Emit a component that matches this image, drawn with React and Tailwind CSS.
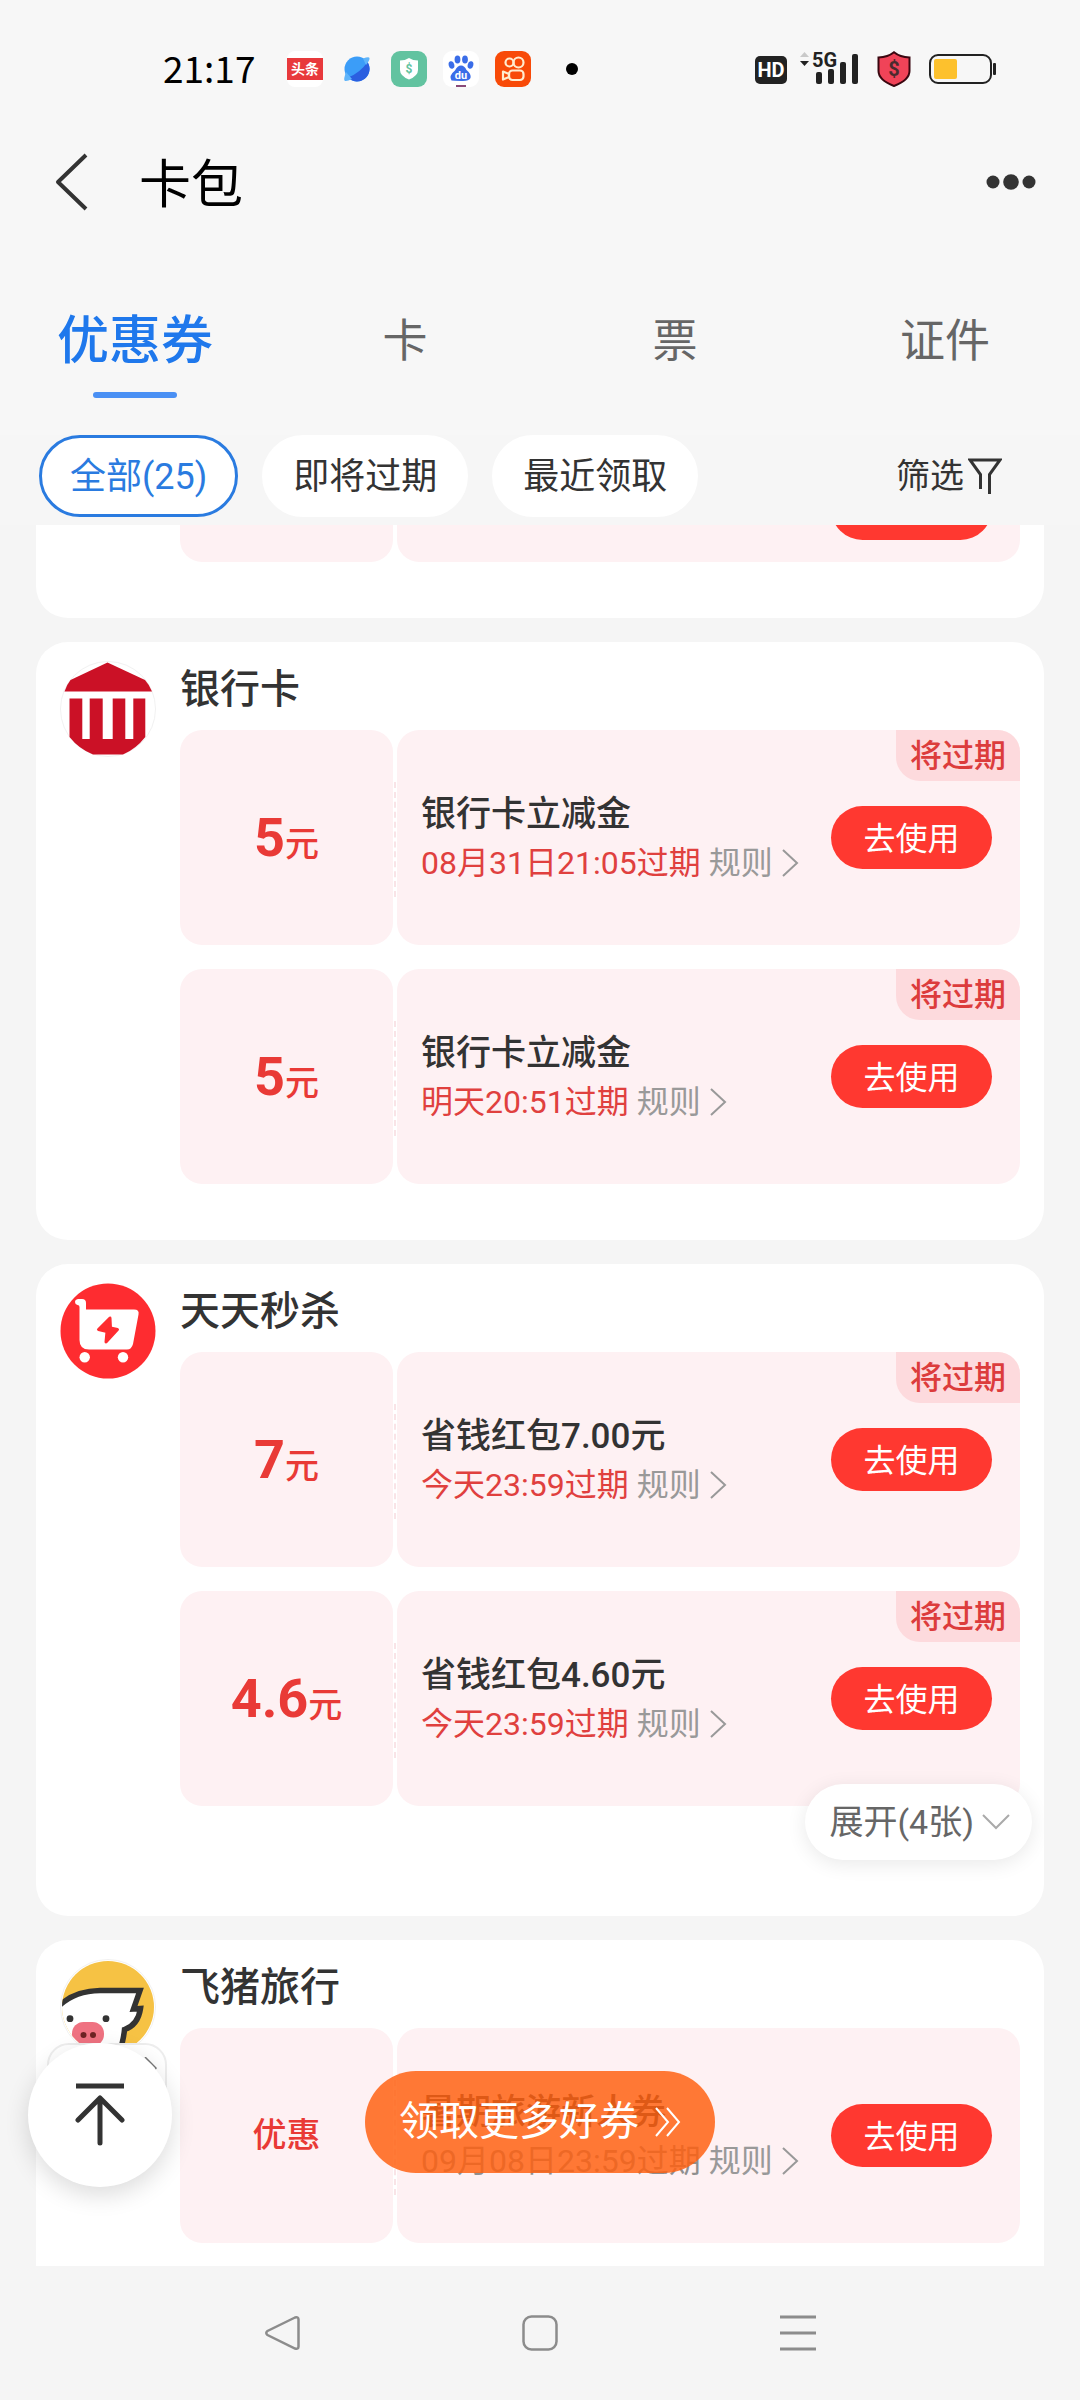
import React, { useState } from "react";

const tabs = ["优惠券", "卡", "票", "证件"];
const filters = ["全部(25)", "即将过期", "最近领取"];

/* ---------- shop logos ---------- */

const BankLogo = () => (
  <svg viewBox="0 0 96 96" className="h-24 w-24">
    <circle cx="48" cy="48" r="47.5" fill="#fff" stroke="#f1f1f1" />
    <path d="M47.5 1.5 85 19q4.500 5 7 11.500H4.500Q6.500 24 10.500 19z" fill="#cb1126" />
    <path
      d="M9.500 37.500h12.800V78h7.400V37.500h13V78h10V37.500h12.600V78h8V37.500h12V76Q76 88 63 93.500H33Q19 88 9.500 76z"
      fill="#cb1126"
    />
  </svg>
);

const CartLogo = () => (
  <svg viewBox="0 0 96 96" className="h-24 w-24">
    <circle cx="48" cy="48" r="47.500" fill="#fe2c30" />
    <path
      d="M18 16h4q4 0 4 4v6.500h48q5.500 0 4.500 5L73 61q-1.500 5.500-6 5.500H29q-9.500 0-9.500-9.500V24q0-2-2-2-2.500-.5-2.500-3t3-3z"
      fill="#fff"
    />
    <path
      d="M50 35 38.500 46.500l8.500 2L46 59l11.500-12.500-7-1.500z"
      fill="#fe2c30"
      stroke="#fe2c30"
      strokeWidth="3"
      strokeLinejoin="round"
    />
    <circle cx="24.700" cy="74.300" r="5.200" fill="#fff" />
    <circle cx="63" cy="74.300" r="5.200" fill="#fff" />
  </svg>
);

const PigLogo = () => (
  <svg viewBox="0 0 96 96" className="h-24 w-24">
    <defs>
      <clipPath id="pig-round">
        <circle cx="48" cy="48" r="46" />
      </clipPath>
    </defs>
    <circle cx="48" cy="48" r="47.500" fill="#fff" stroke="#f1f1f1" />
    <g clipPath="url(#pig-round)">
      <rect width="96" height="96" fill="#f6c244" />
      <path
        d="M-4 50Q12 32 40 31.500h40L73.500 50l7-.5Q78 66 64.500 70.500 63.500 82 58 98H-4z"
        fill="#fff"
        stroke="#333"
        strokeWidth="5.500"
      />
      <circle cx="10" cy="59.700" r="3.400" fill="#333" />
      <circle cx="46" cy="59.700" r="3.400" fill="#333" />
      <rect x="12" y="63" width="32" height="24" rx="11.500" fill="#ef7281" />
      <circle cx="23.500" cy="76" r="3" fill="#6e2323" />
      <circle cx="33" cy="76" r="3" fill="#6e2323" />
    </g>
  </svg>
);

const shops = [
  {
    name: "银行卡",
    logo: BankLogo,
    coupons: [
      { amount: "5", title: "银行卡立减金", expire: "08月31日21:05过期", soon: true },
      { amount: "5", title: "银行卡立减金", expire: "明天20:51过期", soon: true },
    ],
  },
  {
    name: "天天秒杀",
    logo: CartLogo,
    more: 4,
    coupons: [
      { amount: "7", title: "省钱红包7.00元", expire: "今天23:59过期", soon: true },
      { amount: "4.6", title: "省钱红包4.60元", expire: "今天23:59过期", soon: true },
    ],
  },
  {
    name: "飞猪旅行",
    logo: PigLogo,
    coupons: [{ title: "暑期旅游新人券", expire: "09月08日23:59过期", soon: false }],
  },
];

/* ---------- status bar ---------- */

const StatusBar = () => (
  <div className="flex h-[138px] shrink-0 items-center justify-between pr-[84px] pl-[163px]">
    <div className="flex items-center">
      <span className="w-[124px] pb-1 font-['Noto_Sans_CJK_SC',sans-serif] text-[37px] leading-[48px] text-black">
        21:17
      </span>
      <div className="flex items-center gap-4">
        <div className="flex h-9 w-9 items-center rounded-lg bg-white">
          <div className="flex h-[22px] w-9 items-center justify-center bg-[#e8393c] text-[14px] leading-none font-bold text-white">
            头条
          </div>
        </div>
        <svg viewBox="0 0 36 36" className="h-9 w-9">
          <circle cx="18" cy="18" r="12.500" fill="#3b9df8" />
          <path d="M28.500 11A12.500 12.500 0 0 1 9 26.500Q21 22 28.500 11z" fill="#2b5fe0" />
          <path d="M24 7.500q6-2 6.500-.5.500 2-3.500 7M7 21q-2.500 7-1.500 8.500Q7 31 13 28" fill="#5fb4fa" />
        </svg>
        <svg viewBox="0 0 36 36" className="h-9 w-9">
          <rect width="36" height="36" rx="9" fill="#62c3a0" />
          <path d="M18 7q4 2.500 9 2.500V19q0 6-9 9.500Q9 25 9 19V9.500q5 0 9-2.500z" fill="#fff" />
          <text x="18" y="22" textAnchor="middle" fontSize="12" fontWeight="700" fill="#62c3a0">
            $
          </text>
        </svg>
        <svg viewBox="0 0 36 36" className="h-9 w-9">
          <rect width="36" height="36" rx="9" fill="#fff" />
          <g fill="#3a6de8">
            <ellipse cx="8.500" cy="14" rx="2.800" ry="3.800" transform="rotate(-15 8.500 14)" />
            <ellipse cx="14.500" cy="8.500" rx="2.900" ry="3.900" />
            <ellipse cx="22" cy="8.500" rx="2.900" ry="3.900" />
            <ellipse cx="27.500" cy="14" rx="2.800" ry="3.800" transform="rotate(15 27.500 14)" />
            <path d="M18 14.500q3.500 0 5.500 4.500 5 4 4 8-1.500 3.500-9.500 3t-9.500-.5q-3-5 3.500-10 2.500-5 6-5z" />
          </g>
          <text x="18" y="27.500" textAnchor="middle" fontSize="11" fontWeight="700" fill="#fff">
            du
          </text>
          <path d="M13 35h10" stroke="#8a4a78" strokeWidth="2" />
        </svg>
        <svg viewBox="0 0 36 36" className="h-9 w-9">
          <rect width="36" height="36" rx="9" fill="#f84a08" />
          <g fill="none" stroke="#ffeccf" strokeWidth="2.200">
            <circle cx="14.500" cy="11.500" r="4" />
            <circle cx="23.500" cy="11.500" r="5" />
            <rect x="14" y="19.500" width="14.500" height="9.500" rx="3.500" />
            <path d="m8 20.500 6 2.500v3l-6 2.500z" strokeLinejoin="round" />
          </g>
        </svg>
      </div>
      <span className="ml-[35px] h-3 w-3 rounded-full bg-black" />
    </div>

    <div className="flex items-center">
      <svg viewBox="0 0 32 36" className="h-9 w-8">
        <rect y="5" width="32" height="28" rx="5" fill="#222" />
        <text x="16" y="26" textAnchor="middle" fontSize="20" fontWeight="700" fill="#fff">
          HD
        </text>
      </svg>
      <svg viewBox="0 0 60 36" className="ml-3 h-9 w-[60px] overflow-visible">
        <path d="m5.500 1 4.500 5H1z" fill="#c9c9c9" />
        <path d="M1 10h9l-4.500 5z" fill="#222" />
        <text x="13" y="16" fontSize="20" fontWeight="700" fill="#222">
          5G
        </text>
        <g fill="#222">
          <rect x="17" y="21" width="6" height="12" rx="2" />
          <rect x="29" y="18" width="6" height="15" rx="2" />
          <rect x="41" y="11" width="6" height="22" rx="2" />
          <rect x="53" y="3" width="6" height="30" rx="2" />
        </g>
      </svg>
      <svg viewBox="0 0 34 36" className="ml-[18px] h-9 w-[34px]">
        <path
          d="M17 1.200Q23 6 32.500 6.500V20q0 9-15.500 15Q1.500 29 1.500 20V6.500Q11 6 17 1.200z"
          fill="#f04358"
          stroke="#3a0710"
          strokeWidth="2"
        />
        <text x="17" y="25" textAnchor="middle" fontSize="20" fontWeight="700" fill="#4b2a2e">
          $
        </text>
      </svg>
      <svg viewBox="0 0 67 36" className="ml-[18px] h-9 w-[67px]">
        <rect x="1" y="4" width="61" height="28" rx="8" fill="none" stroke="#222" strokeWidth="2" />
        <rect x="5" y="8" width="23" height="20" rx="2" fill="#fdc12d" />
        <rect x="64" y="12" width="3" height="12" rx="1" fill="#222" />
      </svg>
    </div>
  </div>
);

/* ---------- coupon ---------- */

const UseButton = () => (
  <button className="h-[63px] w-[161px] shrink-0 rounded-full bg-[#ff3830] pt-[2px] text-[32px] text-white">
    去使用
  </button>
);

const Coupon = ({ amount, title, expire, soon }) => (
  <li className="relative flex h-[215px] gap-1">
    <div className="flex w-[213px] shrink-0 items-center justify-center rounded-[22px] bg-[#fef1f3] font-medium text-[#e93a36]">
      {amount ? (
        <p className="flex items-baseline pt-[6px] leading-[64px]">
          <span className="text-[54px] font-bold">{amount}</span>
          <span className="text-[34px]">元</span>
        </p>
      ) : (
        <p className="text-[34px]">优惠</p>
      )}
    </div>
    <div className="absolute top-[52px] bottom-[48px] left-[214px] border-l-2 border-dashed border-[#f9e4e7]" />
    <div className="relative flex min-w-0 flex-1 items-center justify-between overflow-hidden rounded-[22px] bg-[#fef1f3] pr-7 pl-6">
      <div className="min-w-0 pt-[2px] leading-[48px] whitespace-nowrap">
        <h3 className="text-[35px] font-medium text-[#333]">{title}</h3>
        <div className="flex items-center gap-2 text-[32px]">
          <span className={soon ? "text-[#e0403e]" : "text-[#8f8f8f]"}>{expire}</span>
          <button className="flex items-center gap-2 text-[#999]">
            规则
            <svg viewBox="0 0 18 28" className="h-7 w-[18px]" fill="none" stroke="#999" strokeWidth="2">
              <path d="m2 1 14 13L2 27" />
            </svg>
          </button>
        </div>
      </div>
      <UseButton />
      {soon && (
        <span className="absolute top-0 right-0 rounded-bl-[24px] bg-[#fddadd] px-[14px] pt-[2px] text-[32px] leading-[49px] font-medium text-[#dc3c3c]">
          将过期
        </span>
      )}
    </div>
  </li>
);

const ShopCard = ({ shop }) => {
  const Logo = shop.logo;
  return (
    <section className="flex shrink-0 gap-6 rounded-[32px] bg-white px-6 pt-[19px] pb-14">
      <div className="h-24 w-24 shrink-0">
        <Logo />
      </div>
      <div className="min-w-0 flex-1">
        <h2 className="mb-3 text-[40px] leading-[57px] font-medium text-[#333]">{shop.name}</h2>
        <ul className="flex flex-col gap-6">
          {shop.coupons.map((coupon, i) => (
            <Coupon key={i} {...coupon} />
          ))}
        </ul>
        {shop.more && (
          <button className="relative -mt-[22px] -mr-3 ml-auto flex h-[76px] items-center gap-2 rounded-full bg-white pr-[22px] pl-6 text-[34px] text-[#666] shadow-[0_4px_20px_rgba(0,0,0,0.09)]">
            展开({shop.more}张)
            <svg viewBox="0 0 28 16" className="h-4 w-7" fill="none" stroke="#aaa" strokeWidth="2">
              <path d="m1 1 13 13L27 1" />
            </svg>
          </button>
        )}
      </div>
    </section>
  );
};

export default function App() {
  const [activeTab, setActiveTab] = useState("优惠券");
  const [activeFilter, setActiveFilter] = useState("全部(25)");

  return (
    <div className="flex h-screen flex-col bg-[#f5f5f5] font-['Roboto','Noto_Sans_CJK_SC',sans-serif]">
      <div className="shrink-0 bg-[#f7f7f7]">
        <StatusBar />

        {/* Title bar */}
        <header className="flex h-[88px] items-center justify-between pr-11 pl-[54px]">
          <div className="flex items-center gap-[51px]">
            <button aria-label="返回">
              <svg viewBox="0 0 34 58" className="h-[58px] w-[34px]" fill="none" stroke="#333" strokeWidth="4">
                <path d="M32 2 4 29l28 27" strokeLinejoin="round" />
              </svg>
            </button>
            <h1 className="pt-2 text-[52px] leading-[72px] text-black">卡包</h1>
          </div>
          <button aria-label="更多">
            <svg viewBox="0 0 50 16" className="h-4 w-[50px]" fill="#333">
              <circle cx="7" cy="8" r="6.500" />
              <circle cx="25" cy="8" r="7.800" />
              <circle cx="43" cy="8" r="6.500" />
            </svg>
          </button>
        </header>
      </div>

      {/* Tabs */}
      <nav className="grid shrink-0 grid-cols-4 bg-[#f7f7f7] pt-[84px] pb-[37px]">
        {tabs.map((tab) => {
          const isActive = tab === activeTab;
          return (
            <button key={tab} onClick={() => setActiveTab(tab)} className="flex flex-col items-center">
              <span
                className={`leading-[64px] ${
                  isActive ? "text-[52px] font-medium text-[#1f78ec]" : "text-[45px] text-[#666]"
                }`}
              >
                {tab}
              </span>
              <span className={`mt-[18px] h-[6px] w-[84px] rounded-full ${isActive ? "bg-[#4a90f4]" : ""}`} />
            </button>
          );
        })}
      </nav>

      {/* Filters */}
      <div className="flex shrink-0 items-center justify-between bg-[#f6f6f6] pr-[78px] pb-2 pl-[39px]">
        <div className="flex gap-6">
          {filters.map((filter) => (
            <button
              key={filter}
              onClick={() => setActiveFilter(filter)}
              className={`h-[82px] rounded-full border-3 bg-white px-7 pt-[2px] text-[36px] ${
                filter === activeFilter ? "border-[#2a7be0] text-[#2a7be0]" : "border-white text-[#333]"
              }`}
            >
              {filter}
            </button>
          ))}
        </div>
        <button className="flex items-center gap-1 text-[34px] text-[#333]">
          筛选
          <svg viewBox="0 0 34 38" className="h-[38px] w-[34px]" fill="none" stroke="#333" strokeWidth="3">
            <path d="M12.500 32V17.500L2 3h30L21.500 17.500V37" />
          </svg>
        </button>
      </div>

      {/* Coupon list */}
      <main className="relative min-h-0 flex-1 overflow-hidden px-9">
        <div className="flex h-full flex-col gap-6 overflow-hidden">
          {/* end of the card that is scrolled under the filters */}
          <section className="shrink-0 rounded-b-[32px] bg-white pr-6 pb-14 pl-36">
            <div className="flex h-[37px] gap-1 overflow-hidden">
              <div className="w-[213px] shrink-0 rounded-b-[22px] bg-[#fef1f3]" />
              <div className="flex flex-1 items-start justify-end overflow-hidden rounded-b-[22px] bg-[#fef1f3] pr-7">
                <button aria-label="去使用" className="-mt-12 h-[63px] w-[161px] rounded-full bg-[#ff3830]" />
              </div>
            </div>
          </section>
          {shops.map((shop) => (
            <ShopCard key={shop.name} shop={shop} />
          ))}
        </div>

        {/* Floating buttons */}
        <div className="absolute bottom-[150px] left-[47px] flex h-[73px] w-[120px] justify-end rounded-[22px] border-2 border-[#ededed] bg-white pt-3 pr-[6px]">
          <svg viewBox="0 0 22 16" className="h-4 w-[22px]" fill="none" stroke="#777" strokeWidth="1.500">
            <path d="M0 1h4M8 0l11 11-2 3" />
          </svg>
        </div>
        <button
          aria-label="回到顶部"
          className="absolute bottom-[79px] left-7 flex h-36 w-36 items-center justify-center rounded-full bg-white shadow-[0_8px_24px_rgba(0,0,0,0.14)]"
        >
          <svg viewBox="0 0 50 64" className="h-16 w-[50px]" fill="none" stroke="#333" strokeWidth="5">
            <path d="M1 3h48" />
            <path d="M25 60V15M3 37l22-22 22 22" strokeLinecap="round" strokeLinejoin="round" />
          </svg>
        </button>
        <button className="absolute bottom-[93px] left-1/2 flex h-[102px] -translate-x-1/2 items-center gap-[14px] rounded-full bg-[#ff6111]/84 px-[34px] text-[40px] whitespace-nowrap text-white">
          领取更多好券
          <svg viewBox="0 0 28 32" className="h-8 w-7" fill="none" stroke="#fff" strokeWidth="2">
            <path d="m3 2 12 14L3 30M14 2l12 14-12 14" />
          </svg>
        </button>
      </main>

      {/* System navigation */}
      <footer className="flex h-[134px] shrink-0 items-center justify-center gap-[222px]">
        <button aria-label="后退">
          <svg viewBox="0 0 36 36" className="h-9 w-9" fill="none" stroke="#8c8c8c" strokeWidth="2.500">
            <path d="M31 2.500 3.500 16q-2.500 2 0 4L31 33.500q3.500 1 3.500-2v-27q0-3-3.500-2z" />
          </svg>
        </button>
        <button aria-label="主屏幕">
          <svg viewBox="0 0 36 36" className="h-9 w-9" fill="none" stroke="#8c8c8c" strokeWidth="2.500">
            <rect x="1.500" y="1.500" width="33" height="33" rx="8" />
          </svg>
        </button>
        <button aria-label="最近任务">
          <svg viewBox="0 0 36 36" className="h-9 w-9" fill="none" stroke="#8c8c8c" strokeWidth="3">
            <path d="M0 2h36M0 18h36M0 34h36" />
          </svg>
        </button>
      </footer>
    </div>
  );
}
